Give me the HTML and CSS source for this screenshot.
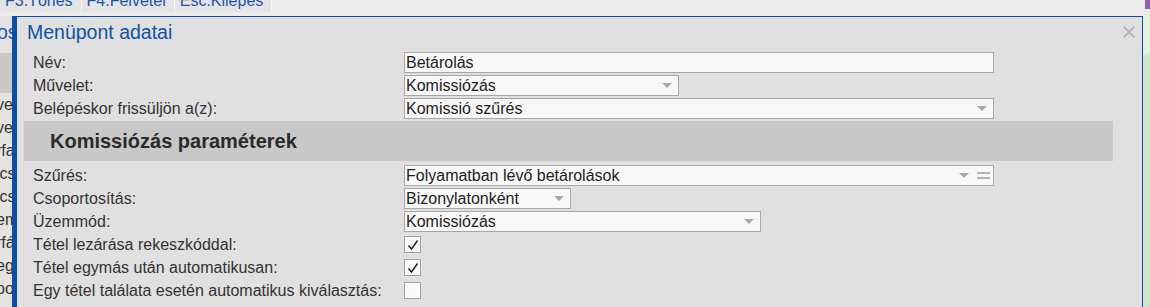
FILE: index.html
```html
<!DOCTYPE html>
<html lang="hu">
<head>
    <meta charset="UTF-8"/>
    <title>Menüpont adatai</title>
    <link rel="stylesheet" href="styles.css">
</head>
<body>

<div class="app">
    <div class="toolbar">
        <span class="tool">F3:Törlés</span>
        <span class="tool">F4:Felvétel</span>
        <span class="tool">Esc:Kilépés</span>
    </div>

    <div class="content">
        <!-- page behind the dialog, only its edge shows -->
        <div class="behind">
            <div class="behind-title">os</div>
            <div class="behind-head"></div>
            <div class="behind-row">vel</div>
            <div class="behind-row">vel</div>
            <div class="behind-row">rfa</div>
            <div class="behind-row">ics</div>
            <div class="behind-row">ics</div>
            <div class="behind-row">em</div>
            <div class="behind-row">rfá</div>
            <div class="behind-row">ege</div>
            <div class="behind-row">pos</div>
        </div>

        <div class="dialog">
            <div class="dialog-title">
                <span>Menüpont adatai</span>
                <svg class="close" width="14" height="12" viewBox="0 0 14 12">
                    <path d="M1.5 0.5 L12.5 11.5 M12.5 0.5 L1.5 11.5" stroke="#b4b4b4" stroke-width="1.8" fill="none"/>
                </svg>
            </div>

            <div class="form-row">
                <label>Név:</label>
                <div class="field w-full">Betárolás</div>
            </div>
            <div class="form-row">
                <label>Művelet:</label>
                <div class="field combo w-muv">Komissiózás<i class="arrow"></i></div>
            </div>
            <div class="form-row">
                <label>Belépéskor frissüljön a(z):</label>
                <div class="field combo w-full">Komissió szűrés<i class="arrow"></i></div>
            </div>

            <div class="section">Komissiózás paraméterek</div>

            <div class="form-row">
                <label>Szűrés:</label>
                <div class="field combo w-full">Folyamatban lévő betárolások<i class="arrow"></i><i class="lines"></i></div>
            </div>
            <div class="form-row">
                <label>Csoportosítás:</label>
                <div class="field combo w-csop">Bizonylatonként<i class="arrow"></i></div>
            </div>
            <div class="form-row">
                <label>Üzemmód:</label>
                <div class="field combo w-uzem">Komissiózás<i class="arrow"></i></div>
            </div>
            <div class="form-row">
                <label>Tétel lezárása rekeszkóddal:</label>
                <div class="check">
                    <svg width="14" height="14" viewBox="0 0 14 14"><polyline points="2.5,7.5 5.5,11 11.5,2.5" stroke="#1e1e1e" stroke-width="1.4" fill="none"/></svg>
                </div>
            </div>
            <div class="form-row">
                <label>Tétel egymás után automatikusan:</label>
                <div class="check">
                    <svg width="14" height="14" viewBox="0 0 14 14"><polyline points="2.5,7.5 5.5,11 11.5,2.5" stroke="#1e1e1e" stroke-width="1.4" fill="none"/></svg>
                </div>
            </div>
            <div class="form-row">
                <label>Egy tétel találata esetén automatikus kiválasztás:</label>
                <div class="check"></div>
            </div>
        </div>
    </div>
</div>

<div class="desk"></div>

</body>
</html>
```

FILE: styles.css
```css
body {
  margin: 0;
  height: 307px;
  overflow: hidden;
  display: flex;
  font-family: 'Liberation Sans', Arial, sans-serif;
  font-size: 16px;
  color: #333333;
  background: #e0e0e0;
}

.app {
  flex: 1;
  display: flex;
  flex-direction: column;
  min-width: 0;
}

.toolbar {
  height: 16px;
  flex: none;
  background: #ececec;
  display: flex;
  overflow: hidden;
}

.tool {
  height: 19px;
  margin-top: -7px;
  line-height: 16px;
  padding: 0 8px 0 5px;
  color: #1b55ab;
  background: #e4e4e4;
  border-right: 1px solid #f6f6f6;
  white-space: nowrap;
}

.content {
  flex: 1;
  display: flex;
  min-height: 0;
}

/* page under the dialog */
.behind {
  width: 12px;
  flex: none;
  overflow: hidden;
  background: #e3e3e3;
  white-space: nowrap;
  padding-top: 1px;
}

.behind-title {
  height: 30px;
  line-height: 30px;
  font-size: 19.5px;
  color: #1b55ab;
  margin-left: -3px;
}

.behind-head {
  height: 40px;
  margin-top: 6px;
  background: #c8c8c8;
}

.behind-row {
  height: 23px;
  line-height: 23px;
  margin-left: -4px;
  color: #333333;
}

.dialog {
  flex: 1;
  background: #e0e0e0;
  border-left: 5px solid #0b4fa6;
  border-top: 1px solid #0b4fa6;
  border-right: 1px solid #0b4fa6;
  padding: 0 6px 0 7px;
}

.dialog-title {
  height: 30px;
  display: flex;
  justify-content: space-between;
  align-items: center;
  padding-left: 3px;
  margin-bottom: 5px;
  font-size: 19.5px;
  color: #1052a8;
}

.close {
  margin-top: -1px;
}

.form-row {
  display: grid;
  grid-template-columns: 371px auto;
  align-items: center;
  height: 21px;
  margin-bottom: 2px;
  padding-left: 9px;
}

.form-row label {
  white-space: nowrap;
  color: #333333;
}

.field {
  box-sizing: border-box;
  height: 21px;
  border: 1px solid #a7a7a7;
  background: #f8f8f8;
  color: #1e1e1e;
  padding-left: 1px;
  line-height: 19px;
  display: flex;
  align-items: center;
  white-space: nowrap;
}

.combo .arrow {
  margin-left: auto;
  margin-right: 6px;
  width: 0;
  height: 0;
  border-left: 5px solid transparent;
  border-right: 5px solid transparent;
  border-top: 5px solid #a8a8a8;
}

.combo .lines {
  width: 13px;
  height: 3px;
  margin: 0 3px 0 2px;
  border-top: 2px solid #b4b4b4;
  border-bottom: 2px solid #b4b4b4;
}

.w-full {
  width: 590px;
}

.w-muv {
  width: 275px;
}

.w-csop {
  width: 167px;
}

.w-uzem {
  width: 357px;
}

.check {
  box-sizing: border-box;
  width: 17px;
  height: 17px;
  border: 1px solid #a0a0a0;
  background: #fafafa;
  display: flex;
  align-items: center;
  justify-content: center;
}

.section {
  height: 40px;
  margin: 2px 23px 4px 0;
  padding-left: 26px;
  background: #c8c8c8;
  display: flex;
  align-items: center;
  font-size: 20px;
  font-weight: bold;
  color: #2a2a2a;
}

.desk {
  width: 7px;
  flex: none;
  background:
    linear-gradient(#8d5fb8, #8d5fb8) no-repeat right top / 5px 9px,
    linear-gradient(165deg, #e3f0de 0, #e3f0de 18%, #cfe5c8 18%, #cfe5c8 100%);
}
```
